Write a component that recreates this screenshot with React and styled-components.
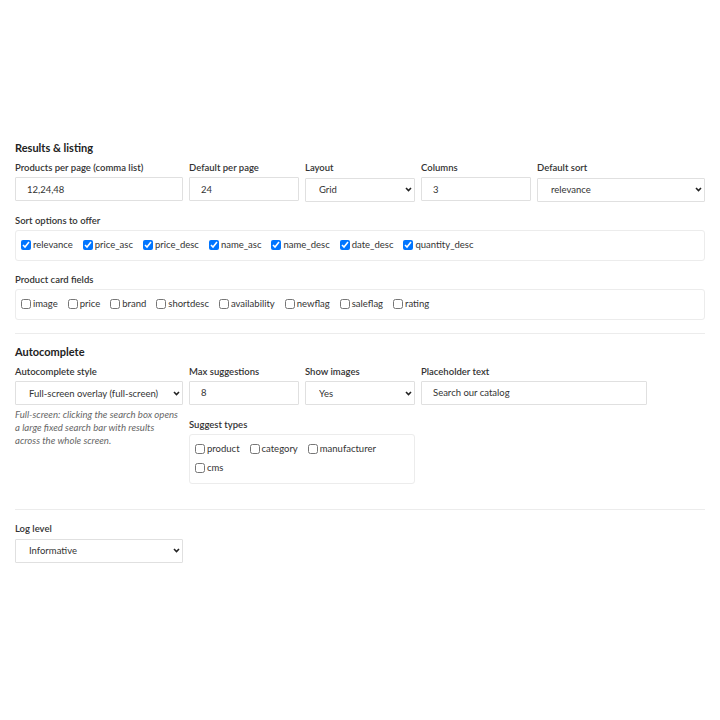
import React from "react";
import styled, { createGlobalStyle } from "styled-components";

const GlobalStyle = createGlobalStyle`
  html, body {
    margin: 0;
    padding: 0;
    background: #fff;
  }
  body {
    font-family: Lato, "Liberation Sans", sans-serif;
    color: #222;
  }
`;

const Page = styled.div`
  padding: 141px 15px 40px;
  width: 690px;
`;

const Section = styled.section`
  padding-top: ${(p) => p.$pt || 0}px;
  padding-bottom: ${(p) => p.$pb || 13}px;
  margin-bottom: 11px;
  border-bottom: ${(p) => (p.$last ? "none" : "1px solid #ececec")};
`;

const Heading = styled.h3`
  margin: 0 0 6px;
  font-size: 11px;
  line-height: 14px;
  font-weight: 700;
  color: #222;
`;

const Row = styled.div`
  display: grid;
  grid-template-columns: ${(p) => p.$cols};
  column-gap: 6px;
  margin-top: ${(p) => p.$mt || 0}px;
  margin-bottom: ${(p) => p.$mb ?? 12}px;
`;

const Field = styled.div`
  display: flex;
  flex-direction: column;
  min-width: 0;
  grid-column: ${(p) => p.$span || "auto"};
`;

const Label = styled.label`
  font-size: 9.5px;
  line-height: 14px;
  font-weight: 600;
  color: #333;
  margin-bottom: 2px;
`;

const Input = styled.input`
  box-sizing: border-box;
  height: 24px;
  width: 100%;
  border: 1px solid #e0e0e0;
  border-radius: 1px;
  padding: 0 11px;
  font-family: inherit;
  font-size: 9.5px;
  color: #333;
  outline: none;
`;

const SelectWrap = styled.div`
  position: relative;
  width: 100%;

  svg {
    position: absolute;
    right: 3px;
    top: 10px;
    pointer-events: none;
  }
`;

const NativeSelect = styled.select`
  appearance: none;
  -webkit-appearance: none;
  box-sizing: border-box;
  height: 24px;
  width: 100%;
  border: 1px solid #e0e0e0;
  border-radius: 1px;
  padding: 0 14px 0 13px;
  font-family: inherit;
  font-size: 9.5px;
  color: #333;
  background: #fff;
  outline: none;
`;

const Chevron = () => (
  <svg width="7" height="5" viewBox="0 0 7 5" aria-hidden="true">
    <path d="M1 1l2.5 2.5L6 1" fill="none" stroke="#222" strokeWidth="1.6" />
  </svg>
);

const Select = ({ children, ...rest }) => (
  <SelectWrap>
    <NativeSelect {...rest}>{children}</NativeSelect>
    <Chevron />
  </SelectWrap>
);

const CheckGroup = styled.div`
  box-sizing: border-box;
  display: flex;
  flex-wrap: wrap;
  align-content: flex-start;
  column-gap: 10px;
  row-gap: 5px;
  border: 1px solid #ececec;
  border-radius: 3px;
  padding: 7px 5px;
  height: ${(p) => p.$h || 31}px;
`;

const Check = styled.label`
  display: inline-flex;
  align-items: center;
  font-size: 9.5px;
  line-height: 14px;
  color: #333;

  input {
    width: 10px;
    height: 10px;
    margin: 0 2px 0 0;
  }
`;

const Help = styled.p`
  margin: 3px 0 0;
  padding-right: 2px;
  font-size: 9.6px;
  line-height: 13px;
  font-style: italic;
  color: #666;
`;

const sortOptions = [
  "relevance",
  "price_asc",
  "price_desc",
  "name_asc",
  "name_desc",
  "date_desc",
  "quantity_desc",
];

const cardFields = [
  "image",
  "price",
  "brand",
  "shortdesc",
  "availability",
  "newflag",
  "saleflag",
  "rating",
];

const suggestTypes = ["product", "category", "manufacturer", "cms"];

const CheckList = ({ items, checked, ...rest }) => (
  <CheckGroup {...rest}>
    {items.map((name) => (
      <Check key={name}>
        <input type="checkbox" defaultChecked={checked} />
        {name}
      </Check>
    ))}
  </CheckGroup>
);

export default function App() {
  return (
    <Page>
      <GlobalStyle />

      <Section>
        <Heading>Results &amp; listing</Heading>
        <Row $cols="168px 110px 110px 110px 168px">
          <Field>
            <Label>Products per page (comma list)</Label>
            <Input defaultValue="12,24,48" />
          </Field>
          <Field>
            <Label>Default per page</Label>
            <Input defaultValue="24" />
          </Field>
          <Field>
            <Label>Layout</Label>
            <Select defaultValue="grid">
              <option value="grid">Grid</option>
              <option value="list">List</option>
            </Select>
          </Field>
          <Field>
            <Label>Columns</Label>
            <Input defaultValue="3" />
          </Field>
          <Field>
            <Label>Default sort</Label>
            <Select defaultValue="relevance">
              {sortOptions.map((o) => (
                <option key={o} value={o}>
                  {o}
                </option>
              ))}
            </Select>
          </Field>
        </Row>

        <Row $cols="1fr" $mb={12}>
          <Field>
            <Label>Sort options to offer</Label>
            <CheckList items={sortOptions} checked />
          </Field>
        </Row>

        <Row $cols="1fr" $mb={0}>
          <Field>
            <Label>Product card fields</Label>
            <CheckList items={cardFields} />
          </Field>
        </Row>
      </Section>

      <Section $pb={25}>
        <Heading>Autocomplete</Heading>
        <Row $cols="168px 110px 110px 226px" $mb={0}>
          <Field>
            <Label>Autocomplete style</Label>
            <Select defaultValue="fullscreen">
              <option value="fullscreen">Full-screen overlay (full-screen)</option>
              <option value="dropdown">Dropdown</option>
            </Select>
            <Help>
              Full-screen: clicking the search box opens a large fixed search
              bar with results across the whole screen.
            </Help>
          </Field>
          <Field $span="2 / span 3">
            <Row $cols="110px 110px 226px" $mb={0}>
              <Field>
                <Label>Max suggestions</Label>
                <Input defaultValue="8" />
              </Field>
              <Field>
                <Label>Show images</Label>
                <Select defaultValue="yes">
                  <option value="yes">Yes</option>
                  <option value="no">No</option>
                </Select>
              </Field>
              <Field>
                <Label>Placeholder text</Label>
                <Input defaultValue="Search our catalog" />
              </Field>
            </Row>
            <Row $cols="226px" $mb={0} $mt={13}>
              <Field>
                <Label>Suggest types</Label>
                <CheckList items={suggestTypes} $h={50} />
              </Field>
            </Row>
          </Field>
        </Row>
      </Section>

      <Section $last $pt={1}>
        <Row $cols="168px" $mb={0}>
          <Field>
            <Label>Log level</Label>
            <Select defaultValue="info">
              <option value="error">Error</option>
              <option value="warning">Warning</option>
              <option value="info">Informative</option>
              <option value="debug">Debug</option>
            </Select>
          </Field>
        </Row>
      </Section>
    </Page>
  );
}
